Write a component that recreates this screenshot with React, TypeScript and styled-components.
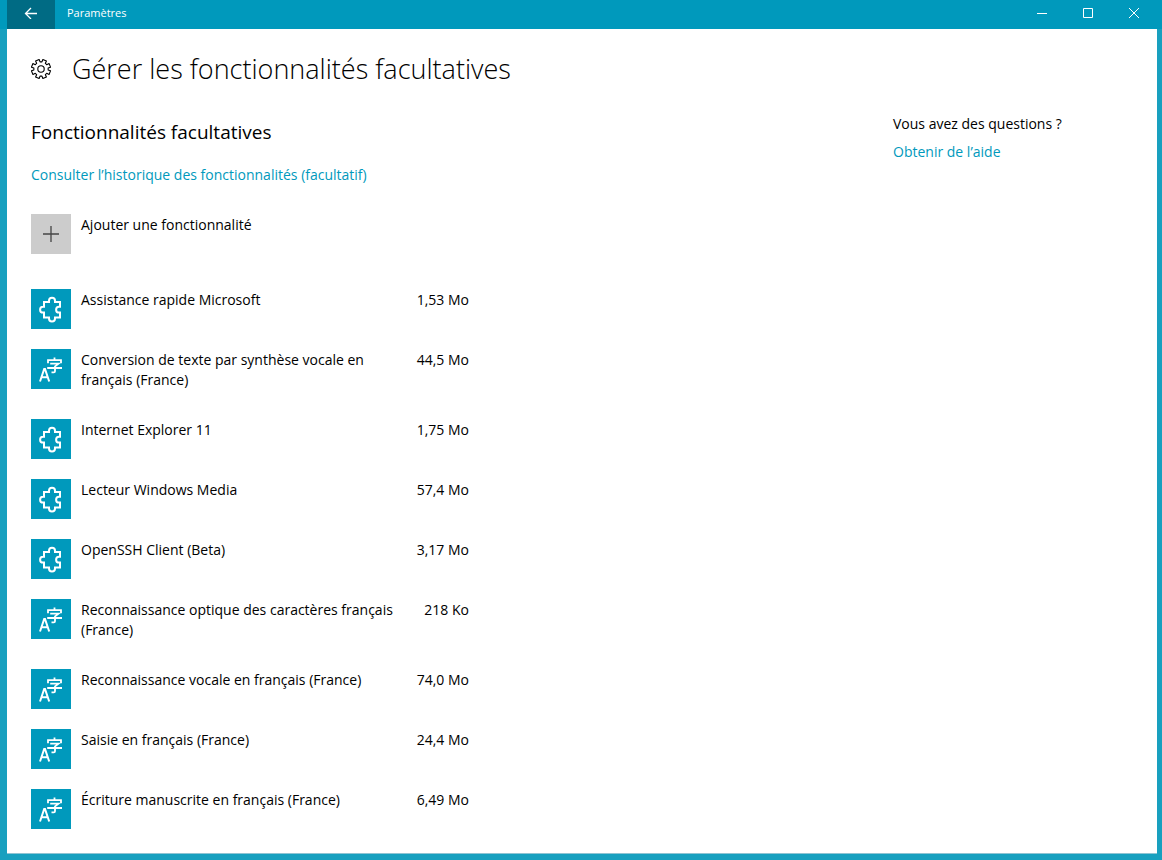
import React from "react";
import styled, { createGlobalStyle } from "styled-components";

const accent = "#0099bc";

const GlobalStyle = createGlobalStyle`
  *, *::before, *::after { box-sizing: border-box; }
  html, body, #root { height: 100%; }
  body {
    margin: 0;
    background: #18a0bf;
    color: #000;
    font-family: "Open Sans", "Noto Sans", sans-serif;
    font-size: 14px;
    line-height: 20px;
  }
  button { font: inherit; color: inherit; border: 0; padding: 0; background: none; }
`;

const Frame = styled.div`
  min-height: 100%;
  display: flex;
  flex-direction: column;
  padding: 0 5px 7px 0;
  background: linear-gradient(${accent} 0 29px, #18a0bf 29px);
`;

const TitleBar = styled.header`
  display: flex;
  height: 29px;
  padding-left: 7px;
  color: #fff;
`;

const BackButton = styled.button`
  display: grid;
  place-items: center;
  width: 48px;
  height: 29px;
  padding-bottom: 4px;
  background: #006b84;
`;

const AppName = styled.span`
  flex: 1;
  padding-left: 12px;
  font-size: 11px;
  line-height: 26px;
`;

const WindowButton = styled.button`
  display: grid;
  place-items: center;
  width: 46px;
  height: 26px;
`;

const Page = styled.div`
  flex: 1;
  margin-left: 7px;
  padding: 20px 0 4px 24px;
  background: #fff;
  border-bottom: 1px solid #8fc4d3;
`;

const PageHeader = styled.div`
  display: flex;
  align-items: center;
  gap: 20px;
  height: 40px;
`;

const PageTitle = styled.h1`
  margin: 0;
  font-size: 27px;
  font-weight: 300;
  line-height: 40px;
`;

const Columns = styled.div`
  display: flex;
  justify-content: space-between;
  padding-top: 25px;
`;

const Main = styled.main`
  width: 438px;
`;

const SectionTitle = styled.h2`
  margin: 0 0 15px;
  font-size: 19px;
  font-weight: 400;
  line-height: 36px;
`;

const Link = styled.a`
  display: block;
  color: ${accent};
  text-decoration: none;
`;

const AddButton = styled.button`
  display: flex;
  align-items: flex-start;
  gap: 10px;
  margin: 29px 0 35px;
`;

const AddLabel = styled.span`
  padding-top: 1px;
`;

const Tile = styled.span<{ $muted?: boolean }>`
  flex: none;
  width: 40px;
  height: 40px;
  background: ${(p) => (p.$muted ? "#ccc" : accent)};

  svg { display: block; }
`;

const FeatureList = styled.ul`
  margin: 0;
  padding: 0;
  list-style: none;
`;

const Feature = styled.li`
  display: flex;
  align-items: flex-start;
  gap: 10px;
  min-height: 60px;
`;

const FeatureName = styled.span`
  flex: 1;
  padding: 1px 0 29px;
`;

const FeatureSize = styled.span`
  width: 60px;
  padding-top: 1px;
  text-align: right;
`;

const Aside = styled.aside`
  width: 264px;
  display: flex;
  flex-direction: column;
  gap: 8px;
`;

const PuzzleIcon = () => (
  <svg width="40" height="40" viewBox="0 0 40 40" fill="none" stroke="#fff" strokeWidth="2" aria-hidden="true">
    <path d="M13 13H18V11.8A2.8 2.8 0 0 1 24 11.8V13H29V17.8H28A2.6 2.6 0 0 0 28 23.6H29V28.4H24V29.4A2.8 2.8 0 0 1 18 29.4V28.4H13V23.6H12A2.9 2.9 0 0 1 12 17.8H13Z" />
  </svg>
);

const LanguageIcon = () => (
  <svg width="40" height="40" viewBox="0 0 40 40" fill="none" stroke="#fff" aria-hidden="true">
    <path d="M9 32.5L13.2 20H14L18.2 32.5M10.6 28.2H16.6" strokeWidth="2" />
    <path d="M23.5 8.6V11M17 14.2V11.2H30V14.2M19.2 14.6H27.6L24 17.4V22.2Q24 23.4 22.8 23.4H20.5M16.2 19H31" strokeWidth="1.8" />
  </svg>
);

const PlusIcon = () => (
  <svg width="40" height="40" viewBox="0 0 40 40" fill="none" stroke="#444" aria-hidden="true">
    <path d="M12 20H28M20 12V28" strokeWidth="1.3" />
  </svg>
);

const teeth = 8;
const gearPath = (() => {
  const points: string[] = [];
  const step = (Math.PI * 2) / teeth;
  for (let i = 0; i < teeth; i++) {
    const a = i * step + step / 2;
    const shape: [number, number][] = [[-0.26, 7.2], [-0.2, 9.7], [0.2, 9.7], [0.26, 7.2]];
    shape.forEach(([offset, radius]) => {
      const x = 10 + radius * Math.cos(a + offset);
      const y = 10 + radius * Math.sin(a + offset);
      points.push(`${x.toFixed(2)} ${y.toFixed(2)}`);
    });
  }
  return `M${points.join("L")}Z`;
})();

const GearIcon = () => (
  <svg width="21" height="21" viewBox="0 0 21 21" fill="none" stroke="#000" strokeWidth="1.1" strokeLinejoin="round" aria-hidden="true">
    <path d={gearPath} />
    <circle cx="10" cy="10" r="3.2" />
  </svg>
);

type Kind = "puzzle" | "language";

const features: { name: string; size: string; kind: Kind }[] = [
  { name: "Assistance rapide Microsoft", size: "1,53 Mo", kind: "puzzle" },
  { name: "Conversion de texte par synthèse vocale en français (France)", size: "44,5 Mo", kind: "language" },
  { name: "Internet Explorer 11", size: "1,75 Mo", kind: "puzzle" },
  { name: "Lecteur Windows Media", size: "57,4 Mo", kind: "puzzle" },
  { name: "OpenSSH Client (Beta)", size: "3,17 Mo", kind: "puzzle" },
  { name: "Reconnaissance optique des caractères français (France)", size: "218 Ko", kind: "language" },
  { name: "Reconnaissance vocale en français (France)", size: "74,0 Mo", kind: "language" },
  { name: "Saisie en français (France)", size: "24,4 Mo", kind: "language" },
  { name: "Écriture manuscrite en français (France)", size: "6,49 Mo", kind: "language" },
];

export default function App() {
  return (
    <>
      <GlobalStyle />
      <Frame>
        <TitleBar>
          <BackButton aria-label="Retour">
            <svg width="14" height="12" viewBox="0 0 14 12" fill="none" stroke="#fff" strokeWidth="1.3" aria-hidden="true">
              <path d="M13 6.5H1.5M7 1L1.5 6.5L7 12" />
            </svg>
          </BackButton>
          <AppName>Paramètres</AppName>
          <WindowButton aria-label="Réduire">
            <svg width="10" height="10" stroke="#fff" aria-hidden="true"><path d="M0 5.5H10" /></svg>
          </WindowButton>
          <WindowButton aria-label="Agrandir">
            <svg width="10" height="10" fill="none" stroke="#fff" aria-hidden="true"><path d="M.5 .5H9.5V9.5H.5Z" /></svg>
          </WindowButton>
          <WindowButton aria-label="Fermer">
            <svg width="10" height="10" stroke="#fff" aria-hidden="true"><path d="M0 0L10 10M10 0L0 10" /></svg>
          </WindowButton>
        </TitleBar>
        <Page>
          <PageHeader>
            <GearIcon />
            <PageTitle>Gérer les fonctionnalités facultatives</PageTitle>
          </PageHeader>
          <Columns>
            <Main>
              <SectionTitle>Fonctionnalités facultatives</SectionTitle>
              <Link href="#historique">Consulter l’historique des fonctionnalités (facultatif)</Link>
              <AddButton>
                <Tile $muted><PlusIcon /></Tile>
                <AddLabel>Ajouter une fonctionnalité</AddLabel>
              </AddButton>
              <FeatureList>
                {features.map((f) => (
                  <Feature key={f.name}>
                    <Tile>{f.kind === "puzzle" ? <PuzzleIcon /> : <LanguageIcon />}</Tile>
                    <FeatureName>{f.name}</FeatureName>
                    <FeatureSize>{f.size}</FeatureSize>
                  </Feature>
                ))}
              </FeatureList>
            </Main>
            <Aside>
              <span>Vous avez des questions ?</span>
              <Link href="#aide">Obtenir de l’aide</Link>
            </Aside>
          </Columns>
        </Page>
      </Frame>
    </>
  );
}
